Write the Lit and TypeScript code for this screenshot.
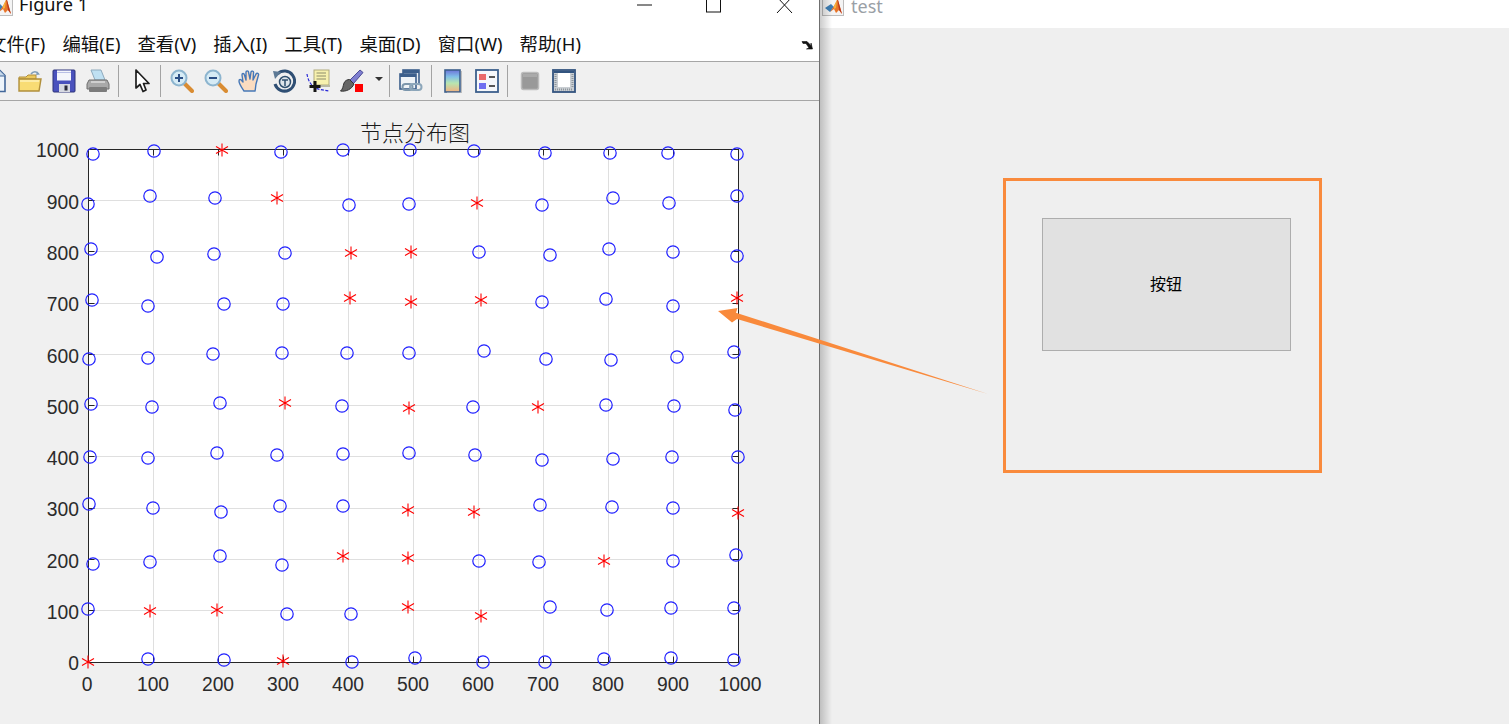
import { LitElement, html, css, svg } from "lit";
import { customElement } from "lit/decorators.js";

type P = [number, number, 0 | 1];
const C = 0 as const;
const S = 1 as const;
const POINTS: P[] = [
  [93,154,C],[154,151,C],[222,150,S],[281,152,C],[343,150,C],[410,150,C],[474,151,C],[545,153,C],[610,153,C],[668,153,C],[737,154,C],
  [88,204,C],[150,196,C],[215,198,C],[277,198,S],[349,205,C],[409,204,C],[477,203,S],[542,205,C],[613,198,C],[669,203,C],[737,196,C],
  [91,249,C],[157,257,C],[214,254,C],[285,253,C],[351,253,S],[411,252,S],[479,252,C],[550,255,C],[609,249,C],[673,252,C],[737,256,C],
  [92,300,C],[148,306,C],[224,304,C],[283,304,C],[350,298,S],[411,302,S],[481,300,S],[542,302,C],[606,299,C],[673,306,C],[737,298,S],
  [89,359,C],[148,358,C],[213,354,C],[282,353,C],[347,353,C],[409,353,C],[484,351,C],[546,359,C],[611,360,C],[677,357,C],[734,352,C],
  [91,404,C],[152,407,C],[220,403,C],[285,403,S],[342,406,C],[409,408,S],[473,407,C],[538,407,S],[606,405,C],[674,406,C],[735,410,C],
  [90,457,C],[148,458,C],[217,453,C],[277,455,C],[343,454,C],[409,453,C],[475,455,C],[542,460,C],[613,459,C],[672,457,C],[738,457,C],
  [89,504,C],[153,508,C],[221,512,C],[280,506,C],[343,506,C],[408,510,S],[474,512,S],[540,505,C],[612,507,C],[673,508,C],[738,513,S],
  [93,564,C],[150,562,C],[220,556,C],[282,565,C],[343,556,S],[408,558,S],[479,561,C],[539,562,C],[604,561,S],[673,561,C],[736,555,C],
  [88,609,C],[150,611,S],[217,610,S],[287,614,C],[351,614,C],[408,607,S],[481,616,S],[550,607,C],[607,610,C],[671,608,C],[734,608,C],
  [88,662,S],[148,659,C],[224,660,C],[283,661,S],[352,662,C],[415,658,C],[483,662,C],[545,662,C],[604,659,C],[671,658,C],[734,660,C],
];

const L = 88, R = 738, T = 149, B = 662;
const TICKS = [0,100,200,300,400,500,600,700,800,900,1000];
const gx = (v: number) => L + (v / 1000) * (R - L);
const gy = (v: number) => B - (v / 1000) * (B - T);
const crisp = (n: number) => Math.floor(n + 0.2) + 0.5;

const logo = html`<svg class="logo" viewBox="0 0 22 22">
  <rect x="0.5" y="0.5" width="21" height="21" fill="#f4f4f4" stroke="#bdbdbd"/>
  <path d="M3 14 L9 10 L12 13 L8 18 Z" fill="#3f7fb5"/>
  <path d="M8 18 L12 12 L15 6 L16 6 L20 20 L17 16 L14 19 L12 15 Z" fill="#e8762a"/>
  <path d="M12 12 L15 6 L14 14 L12 15 Z" fill="#f6b23c"/>
  <path d="M15.5 6 L16 6 L20 20 L17 16 Z" fill="#b9361c"/>
</svg>`;

const icons = {
  doc: html`<svg viewBox="0 0 24 24"><path d="M4 1.5H16L21 6.5V22.5H4Z" fill="#eef5fb" stroke="#43689a" stroke-width="1.6"/><path d="M15.5 1.5V7H21" fill="#c6d8ea" stroke="#43689a"/></svg>`,
  open: html`<svg viewBox="0 0 24 24"><path d="M13 5C15 2 19 2 20.5 5" fill="none" stroke="#7e9cb8" stroke-width="1.6"/><path d="M19 2.5L22 5.5L18 6Z" fill="#7e9cb8"/><path d="M1 8H8L10 6H18V10H1Z" fill="#ecc95c" stroke="#b08f3c"/><path d="M1 10H23L21 22H1Z" fill="#f8dc74" stroke="#b08f3c" stroke-width="1.4"/><path d="M2 12H21" stroke="#fdf1b4" stroke-width="1.6"/></svg>`,
  save: html`<svg viewBox="0 0 24 24"><rect x="1" y="1" width="22" height="22" rx="1" fill="#4a52bd" stroke="#2c3278"/><rect x="5" y="1.5" width="14" height="10" fill="#f4f6fb"/><rect x="5" y="3" width="14" height="1" fill="#b9c0e6"/><rect x="7" y="15" width="11" height="8" fill="#d7d9e2"/><rect x="12.5" y="16.5" width="3" height="5" fill="#2b2b3a"/></svg>`,
  print: html`<svg viewBox="0 0 24 24"><path d="M5 1H15L19 11H9Z" fill="#bfe0f2" stroke="#8eaabd"/><path d="M3 11H21L23 15V20H1V15Z" fill="#a9a9a9" stroke="#6e6e6e"/><rect x="3" y="18" width="18" height="5" rx="1" fill="#7c7c7c"/><path d="M5 13H19" stroke="#dcdcdc" stroke-width="1.5"/></svg>`,
  arrow: html`<svg viewBox="0 0 24 24"><path d="M6 1V19L10 15.5L13 22.5L16 21L13.5 14.5L19 14.5Z" fill="#fff" stroke="#1e1e1e" stroke-width="1.7" stroke-linejoin="round"/></svg>`,
  zin: html`<svg viewBox="0 0 24 24"><path d="M14 14L22 22" stroke="#d98c32" stroke-width="4" stroke-linecap="round"/><circle cx="9" cy="9" r="7.5" fill="#d6ebf5" stroke="#8db5cf" stroke-width="2"/><path d="M5 9H13M9 5V13" stroke="#2b4f86" stroke-width="2"/></svg>`,
  zout: html`<svg viewBox="0 0 24 24"><path d="M14 14L22 22" stroke="#d98c32" stroke-width="4" stroke-linecap="round"/><circle cx="9" cy="9" r="7.5" fill="#d6ebf5" stroke="#8db5cf" stroke-width="2"/><path d="M5 9H13" stroke="#2b4f86" stroke-width="2"/></svg>`,
  hand: html`<svg viewBox="0 0 24 24"><path d="M6 22C4 19 1 15 1 12C1 10 3 10 4 12L5 13L4 6C4 4 6 4 6.500 6L8 11L8 3C8 1.500 10.500 1.500 10.500 3L12 10L13 3C13.500 1.500 16 2 15.500 4L15 11L18 5C19 3.500 21 4.500 20.500 6L18 15C17.500 18 17.500 20 17 22Z" fill="#fbdcc0" stroke="#4678b8" stroke-width="1.400" stroke-linejoin="round"/></svg>`,
  rot: html`<svg viewBox="0 0 24 24"><path d="M5.500 5A10 10 0 1 1 3 15" fill="none" stroke="#2f4f74" stroke-width="3"/><path d="M1 2L9 3L3 10Z" fill="#5d7995"/><circle cx="13" cy="13" r="5.500" fill="#dfe5ea" stroke="#30506f" stroke-width="1.500"/><path d="M10 11H16M13 11V17" stroke="#30506f" stroke-width="1.500"/></svg>`,
  tip: html`<svg viewBox="0 0 24 24"><rect x="8" y="1" width="15" height="15" fill="#f7f1ae" stroke="#b0aa7c"/><rect x="10" y="16" width="14" height="2" fill="#b9b9a4"/><path d="M10.500 4H20M10.500 7H20M10.500 10H20" stroke="#8d8c6a"/><path d="M1 5C2 12 6 19 14 20.500C17 21 20 21.500 23 22" fill="none" stroke="#2626d8" stroke-width="1.200" stroke-dasharray="3 1.500"/><path d="M9 12V23M3.500 17.500H14.500" stroke="#151515" stroke-width="3"/></svg>`,
  brush: html`<svg viewBox="0 0 24 24"><path d="M10 11L20 1L23 3.500L13.500 14.500Z" fill="#7f7fd0" stroke="#4a4a96"/><path d="M9.500 10.500L14 15C12 20 6 23 0.500 22C3 20 3 17 4 14C5 11.500 7.500 10.500 9.500 10.500Z" fill="#666" stroke="#333"/><rect x="15" y="15" width="8" height="8" fill="#f00"/></svg>`,
  link: html`<svg viewBox="0 0 24 24"><rect x="4" y="1" width="16" height="14" fill="#e8eef4" stroke="#3c5f8c" stroke-width="1.600"/><rect x="4" y="1" width="16" height="3" fill="#3c5f8c"/><rect x="1" y="5" width="16" height="15" fill="#eef3f7" stroke="#3c5f8c" stroke-width="1.600"/><rect x="1" y="5" width="16" height="3" fill="#3c5f8c"/><rect x="3.500" y="15" width="10" height="6" rx="3" fill="none" stroke="#7b96ac" stroke-width="2"/><rect x="11" y="15" width="11.500" height="6" rx="3" fill="none" stroke="#8ca6ba" stroke-width="2"/></svg>`,
  cbar: html`<svg viewBox="0 0 24 24"><defs><linearGradient id="cb" x1="0" y1="0" x2="0" y2="1"><stop offset="0" stop-color="#6d73d8"/><stop offset="0.3" stop-color="#80bfe8"/><stop offset="0.6" stop-color="#b8e6b0"/><stop offset="1" stop-color="#f2b080"/></linearGradient></defs><rect x="4" y="1" width="15" height="22" fill="url(#cb)" stroke="#3c5f8c" stroke-width="1.600"/><path d="M20.500 2V24H6" fill="none" stroke="#bdbdbd"/></svg>`,
  legend: html`<svg viewBox="0 0 24 24"><rect x="1" y="1" width="22" height="22" fill="#f5f7fa" stroke="#3c5f8c" stroke-width="1.800"/><rect x="4" y="5" width="7" height="6" fill="#ea6a6a"/><rect x="4" y="14" width="7" height="6" fill="#6f6ff0"/><path d="M14 8H20M14 17H20" stroke="#222" stroke-width="1.500"/></svg>`,
  gray: html`<svg viewBox="0 0 24 24"><rect x="3.500" y="3.500" width="17" height="17" rx="2" fill="#999" stroke="#bcbcbc" stroke-width="1.500"/><rect x="5" y="5" width="14" height="3" fill="#aaa"/></svg>`,
  box: html`<svg viewBox="0 0 24 24"><rect x="1" y="1" width="22" height="22" fill="#c9ced3" stroke="#33547f" stroke-width="1.800"/><rect x="2" y="2" width="20" height="2" fill="#33547f"/><rect x="6" y="4" width="12" height="14" fill="#fff"/><path d="M3.500 5V18M20.500 5V18M3 20.500H21" stroke="#8f969c" stroke-width="2" stroke-dasharray="1 1"/></svg>`,
};

@customElement("app-root")
export class AppRoot extends LitElement {
  static styles = css`
    :host {
      display: block;
      width: 1509px;
      height: 724px;
      overflow: hidden;
      position: relative;
      background: #f0f0f0;
    }
    .desk {
      display: flex;
      height: 724px;
    }
    .fig {
      flex: none;
      width: 819px;
      border-right: 1px solid #6f6f6f;
      background: #f0f0f0;
      display: flex;
      flex-direction: column;
      overflow: hidden;
    }
    .title {
      flex: none;
      height: 28px;
      background: #fff;
      display: flex;
      align-items: flex-start;
      overflow: hidden;
    }
    .logo {
      flex: none;
      width: 22px;
      height: 22px;
      margin-top: -6px;
    }
    .fig .logo {
      margin-left: -9px;
    }
    .fig .name {
      font: 18.2px/24px "Noto Sans", sans-serif;
      color: #111;
      margin: -8px 0 0 6px;
    }
    .winbtns {
      margin-left: auto;
      width: 189px;
      height: 16px;
      margin-top: -2px;
      flex: none;
    }
    .menu {
      flex: none;
      height: 33px;
      background: #fff;
      display: flex;
      align-items: center;
      gap: 17px;
      margin-left: -12px;
      font: 18.4px/24px "Noto Sans", "Noto Sans CJK SC", sans-serif;
      color: #111;
      box-sizing: border-box;
      padding-bottom: 1px;
      white-space: nowrap;
    }
    .overflow {
      margin-left: auto;
      width: 12px;
      height: 10px;
      flex: none;
      position: relative;
      left: -6px;
      top: 1px;
    }
    .tools {
      flex: none;
      height: 40px;
      box-sizing: border-box;
      border-top: 1px solid #a6a6a6;
      border-bottom: 1px solid #a6a6a6;
      background: #f0f0f0;
      display: flex;
      align-items: center;
      margin-left: -21px;
    }
    .slot {
      flex: none;
      width: 34px;
      height: 24px;
      display: flex;
      justify-content: center;
    }
    .slot svg {
      width: 24px;
      height: 24px;
      display: block;
    }
    .slot.cur {
      width: 30px;
      margin-left: 4px;
    }
    .slot.gap1 {
      margin-left: 1px;
    }
    .caret {
      flex: none;
      width: 20px;
      display: flex;
      justify-content: center;
    }
    .caret i {
      display: block;
      border: 4px solid transparent;
      border-top: 4px solid #333;
      border-bottom: 0;
      margin-top: -4px;
    }
    .sep {
      flex: none;
      width: 1px;
      height: 32px;
      background: #a3a3a3;
      margin: 0 4px 0 3px;
    }
    .sep.tight {
      margin-left: 0;
    }
    .plot {
      flex: none;
      display: block;
      width: 819px;
      height: 623px;
    }
    .plot text {
      font-family: "Liberation Sans", sans-serif;
      font-size: 19.3px;
      fill: #2b2b2b;
    }
    .plot text.ptitle {
      font-family: "Noto Sans CJK SC", sans-serif;
      font-size: 22px;
      font-weight: 300;
      fill: #1a1a1a;
    }
    .second {
      flex: 1;
      display: flex;
      flex-direction: column;
      position: relative;
      background: #efefef;
    }
    .second::before {
      content: "";
      position: absolute;
      left: 0;
      top: 0;
      bottom: 0;
      width: 12px;
      background: linear-gradient(to right, rgba(0,0,0,0.2), rgba(0,0,0,0));
      z-index: 1;
    }
    .second .title {
      padding-left: 2px;
    }
    .second .name {
      font: 18px/24px "Noto Sans", sans-serif;
      color: #9aa0a6;
      margin: -6px 0 0 7px;
    }
    .body {
      flex: 1;
      padding: 150px 0 0 183px;
    }
    .mark {
      box-sizing: border-box;
      width: 319px;
      height: 295px;
      border: 3px solid #f98a3c;
      padding: 37px 30px 0 36px;
    }
    .btn {
      box-sizing: border-box;
      width: 249px;
      height: 133px;
      background: #e1e1e1;
      border: 1px solid #adadad;
      display: flex;
      align-items: center;
      justify-content: center;
      font: 16px/20px "Noto Sans CJK SC", sans-serif;
      color: #000;
      padding: 0 1px 4px 0;
    }
    .callout {
      position: absolute;
      left: 0;
      top: 0;
      width: 1509px;
      height: 724px;
      pointer-events: none;
      z-index: 2;
    }
  `;

  private star(x: number, y: number) {
    return svg`<path d="M${x} ${y - 6.5}V${y + 6.5}M${x - 6} ${y - 3.5}L${x + 6} ${y + 3.5}M${x - 6} ${y + 3.5}L${x + 6} ${y - 3.5}" stroke="#f00" stroke-width="1.1" fill="none"/>`;
  }

  private chart() {
    const l = crisp(L), r = crisp(R), t = crisp(T), b = crisp(B);
    return html`<svg class="plot" viewBox="0 101 819 623">
      <rect x=${l} y=${t} width=${r - l} height=${b - t} fill="#fff"/>
      ${TICKS.slice(1, -1).map((v) => svg`
        <path d="M${crisp(gx(v))} ${t}V${b}M${l} ${crisp(gy(v))}H${r}" stroke="#dfdfdf" stroke-width="1"/>
      `)}
      ${TICKS.slice(1, -1).map((v) => svg`
        <path d="M${crisp(gx(v))} ${t}v6M${crisp(gx(v))} ${b}v-6M${l} ${crisp(gy(v))}h6M${r} ${crisp(gy(v))}h-6" stroke="#262626" stroke-width="1"/>
      `)}
      <rect x=${l} y=${t} width=${r - l} height=${b - t} fill="none" stroke="#262626" stroke-width="1"/>
      ${TICKS.map((v) => svg`<text x="79" y=${gy(v) + 8.300} text-anchor="end">${v}</text>`)}
      ${TICKS.map((v) => svg`<text x=${gx(v) + (v === 0 ? -1 : v === 1000 ? 2 : 0)} y="691" text-anchor="middle">${v}</text>`)}
      <text class="ptitle" x="415" y="141" text-anchor="middle">节点分布图</text>
      ${POINTS.map(([x, y, k]) =>
        k === S
          ? this.star(x, y)
          : svg`<circle cx=${x} cy=${y} r="6.2" fill="none" stroke="#1f1fff" stroke-width="1.2"/>`
      )}
    </svg>`;
  }

  render() {
    const menus = ["文件(F)", "编辑(E)", "查看(V)", "插入(I)", "工具(T)", "桌面(D)", "窗口(W)", "帮助(H)"];
    return html`
      <div class="desk">
        <div class="fig">
          <div class="title">
            ${logo}
            <span class="name">Figure 1</span>
            <svg class="winbtns" viewBox="0 -2 189 16">
              <path d="M7 5H22" stroke="#111" stroke-width="1"/>
              <rect x="76.500" y="-4" width="14" height="16" fill="none" stroke="#111" stroke-width="1"/>
              <path d="M147 -3L162 13M162 -3L147 13" stroke="#111" stroke-width="1" fill="none"/>
            </svg>
          </div>
          <div class="menu">
            ${menus.map((m) => html`<span>${m}</span>`)}
            <svg class="overflow" viewBox="0 0 12 10">
              <path d="M1 1.500H6L10 5.500V3L11.500 9H5.500L8 8L5 3.500H2Z" fill="#111" stroke="#111" stroke-width="0.6"/>
            </svg>
          </div>
          <div class="tools">
            <div class="slot">${icons.doc}</div>
            <div class="slot">${icons.open}</div>
            <div class="slot">${icons.save}</div>
            <div class="slot">${icons.print}</div>
            <div class="sep"></div>
            <div class="slot cur">${icons.arrow}</div>
            <div class="sep"></div>
            <div class="slot">${icons.zin}</div>
            <div class="slot">${icons.zout}</div>
            <div class="slot">${icons.hand}</div>
            <div class="slot">${icons.rot}</div>
            <div class="slot">${icons.tip}</div>
            <div class="slot">${icons.brush}</div>
            <div class="caret"><i></i></div>
            <div class="sep tight"></div>
            <div class="slot">${icons.link}</div>
            <div class="sep"></div>
            <div class="slot">${icons.cbar}</div>
            <div class="slot">${icons.legend}</div>
            <div class="sep"></div>
            <div class="slot gap1">${icons.gray}</div>
            <div class="slot">${icons.box}</div>
          </div>
          ${this.chart()}
        </div>
        <div class="second">
          <div class="title">
            ${logo}
            <span class="name">test</span>
          </div>
          <div class="body">
            <div class="mark">
              <div class="btn">按钮</div>
            </div>
          </div>
        </div>
      </div>
      <svg class="callout" viewBox="0 0 1509 724">
        <path d="M718 311L737.500 308L736 312.700L988 394L737 319L732 322.500Z" fill="#f98a3c"/>
      </svg>
    `;
  }
}
